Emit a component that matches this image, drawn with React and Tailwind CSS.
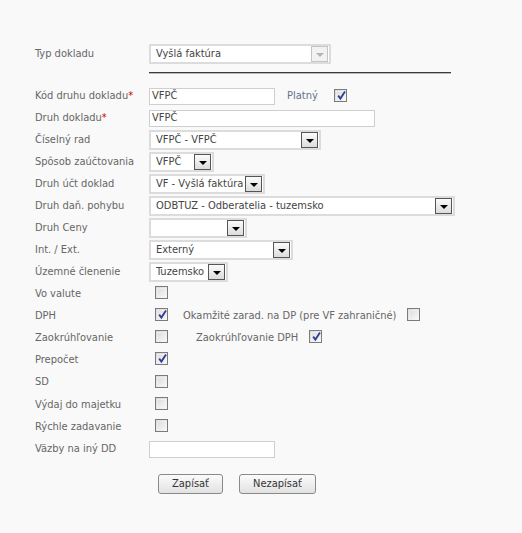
import React from "react";

const font = { fontFamily: '"DejaVu Sans Condensed", "DejaVu Sans", sans-serif' };

function Arrow({ disabled }) {
  return (
    <span
      className={
        "flex h-[16px] w-[17px] shrink-0 items-end justify-center pb-[4px] border " +
        (disabled
          ? "border-[#c4c4c4] bg-[#f2f2f2]"
          : "border-[#555] bg-gradient-to-b from-[#fbfbfb] to-[#dcdcdc]")
      }
    >
      <svg width="8" height="4" viewBox="0 0 8 4">
        <path d="M0 0h8L4 4z" fill={disabled ? "#b4b4b4" : "#000"} />
      </svg>
    </span>
  );
}

function Select({ value, width, disabled }) {
  return (
    <div
      className="flex h-[20px] items-center border-2 border-[#dcdcdc] bg-white pl-[5px] pr-[1px] text-[11px] font-normal text-[#444]"
      style={{ width }}
    >
      <span className="flex-1 truncate">{value}</span>
      <Arrow disabled={disabled} />
    </div>
  );
}

function TextInput({ value, width }) {
  return (
    <div
      className="flex h-[17px] items-center border border-[#cfcfcf] bg-white pl-[2px] text-[11px] font-normal text-[#444]"
      style={{ width }}
    >
      {value}
    </div>
  );
}

function Check({ checked }) {
  return (
    <span className="relative inline-block h-[13px] w-[13px] shrink-0 border border-[#7b7b7b] bg-gradient-to-br from-[#d9d9d9] to-[#fafafa]">
      <span className="absolute inset-[1px] border border-[#f4f4f4]/60" />
      {checked && (
        <svg className="absolute left-[1px] top-[0px]" width="11" height="11" viewBox="0 0 11 11">
          <path d="M2.2 5.6 L4.4 8.6 L9 1.6" fill="none" stroke="#2f3f93" strokeWidth="1.8" />
        </svg>
      )}
    </span>
  );
}

function Row({ label, req, h = 22, children }) {
  return (
    <div className="flex items-center" style={{ height: h }}>
      <div className="w-[114px] shrink-0 text-[11px] text-[#666]">
        {label}
        {req && <span className="text-[#c00]">*</span>}
      </div>
      <div className="flex items-center">{children}</div>
    </div>
  );
}

export default function App() {
  return (
    <div className="h-[533px] w-[522px] bg-[#f9f9f9] pl-[35px] pt-[44px]" style={font}>
      <Row label="Typ dokladu" h={20}>
        <Select value="Vyšlá faktúra" width={182} disabled />
      </Row>
      <div className="ml-[114px] mt-[8px] h-[2px] w-[302px] border-t border-[#3a3a3a] bg-[#bbb]" />

      <div className="mt-[12px]">
        <Row label="Kód druhu dokladu" req h={21}>
          <TextInput value="VFPČ" width={126} />
          <span className="ml-[12px] text-[11px] text-[#66708a]">Platný</span>
          <span className="ml-[16px]">
            <Check checked />
          </span>
        </Row>
        <Row label="Druh dokladu" req h={22}>
          <TextInput value="VFPČ" width={226} />
        </Row>
        <Row label="Číselný rad">
          <Select value="VFPČ - VFPČ" width={172} />
        </Row>
        <Row label="Spôsob zaúčtovania">
          <Select value="VFPČ" width={65} />
        </Row>
        <Row label="Druh účt doklad">
          <Select value="VF - Vyšlá faktúra" width={116} />
        </Row>
        <Row label="Druh daň. pohybu">
          <Select value="ODBTUZ - Odberatelia - tuzemsko" width={306} />
        </Row>
        <Row label="Druh Ceny">
          <Select value="" width={98} />
        </Row>
        <Row label="Int. / Ext.">
          <Select value="Externý" width={144} />
        </Row>
        <Row label="Územné členenie">
          <Select value="Tuzemsko" width={79} />
        </Row>
        <Row label="Vo valute">
          <span className="ml-[6px]">
            <Check />
          </span>
        </Row>
        <Row label="DPH">
          <span className="ml-[6px]">
            <Check checked />
          </span>
          <span className="ml-[15px] text-[11px] text-[#666]">Okamžité zarad. na DP (pre VF zahraničné)</span>
          <span className="ml-[11px]">
            <Check />
          </span>
        </Row>
        <Row label="Zaokrúhľovanie">
          <span className="ml-[6px]">
            <Check />
          </span>
          <span className="ml-[28px] text-[11px] text-[#666]">Zaokrúhľovanie DPH</span>
          <span className="ml-[11px]">
            <Check checked />
          </span>
        </Row>
        <Row label="Prepočet">
          <span className="ml-[6px]">
            <Check checked />
          </span>
        </Row>
        <Row label="SD" h={23}>
          <span className="ml-[6px]">
            <Check />
          </span>
        </Row>
        <Row label="Výdaj do majetku">
          <span className="ml-[6px]">
            <Check />
          </span>
        </Row>
        <Row label="Rýchle zadavanie">
          <span className="ml-[6px]">
            <Check />
          </span>
        </Row>
        <Row label="Väzby na iný DD">
          <TextInput value="" width={126} />
        </Row>
      </div>

      <div className="ml-[123px] mt-[14px] flex gap-[16px]">
        <button className="h-[20px] w-[65px] rounded-[3px] border border-[#8a8a8a] bg-gradient-to-b from-[#fbfbfb] to-[#e2e2e2] text-[11px] text-[#333]">
          Zapísať
        </button>
        <button className="h-[20px] w-[77px] rounded-[3px] border border-[#8a8a8a] bg-gradient-to-b from-[#fbfbfb] to-[#e2e2e2] text-[11px] text-[#333]">
          Nezapísať
        </button>
      </div>
    </div>
  );
}
